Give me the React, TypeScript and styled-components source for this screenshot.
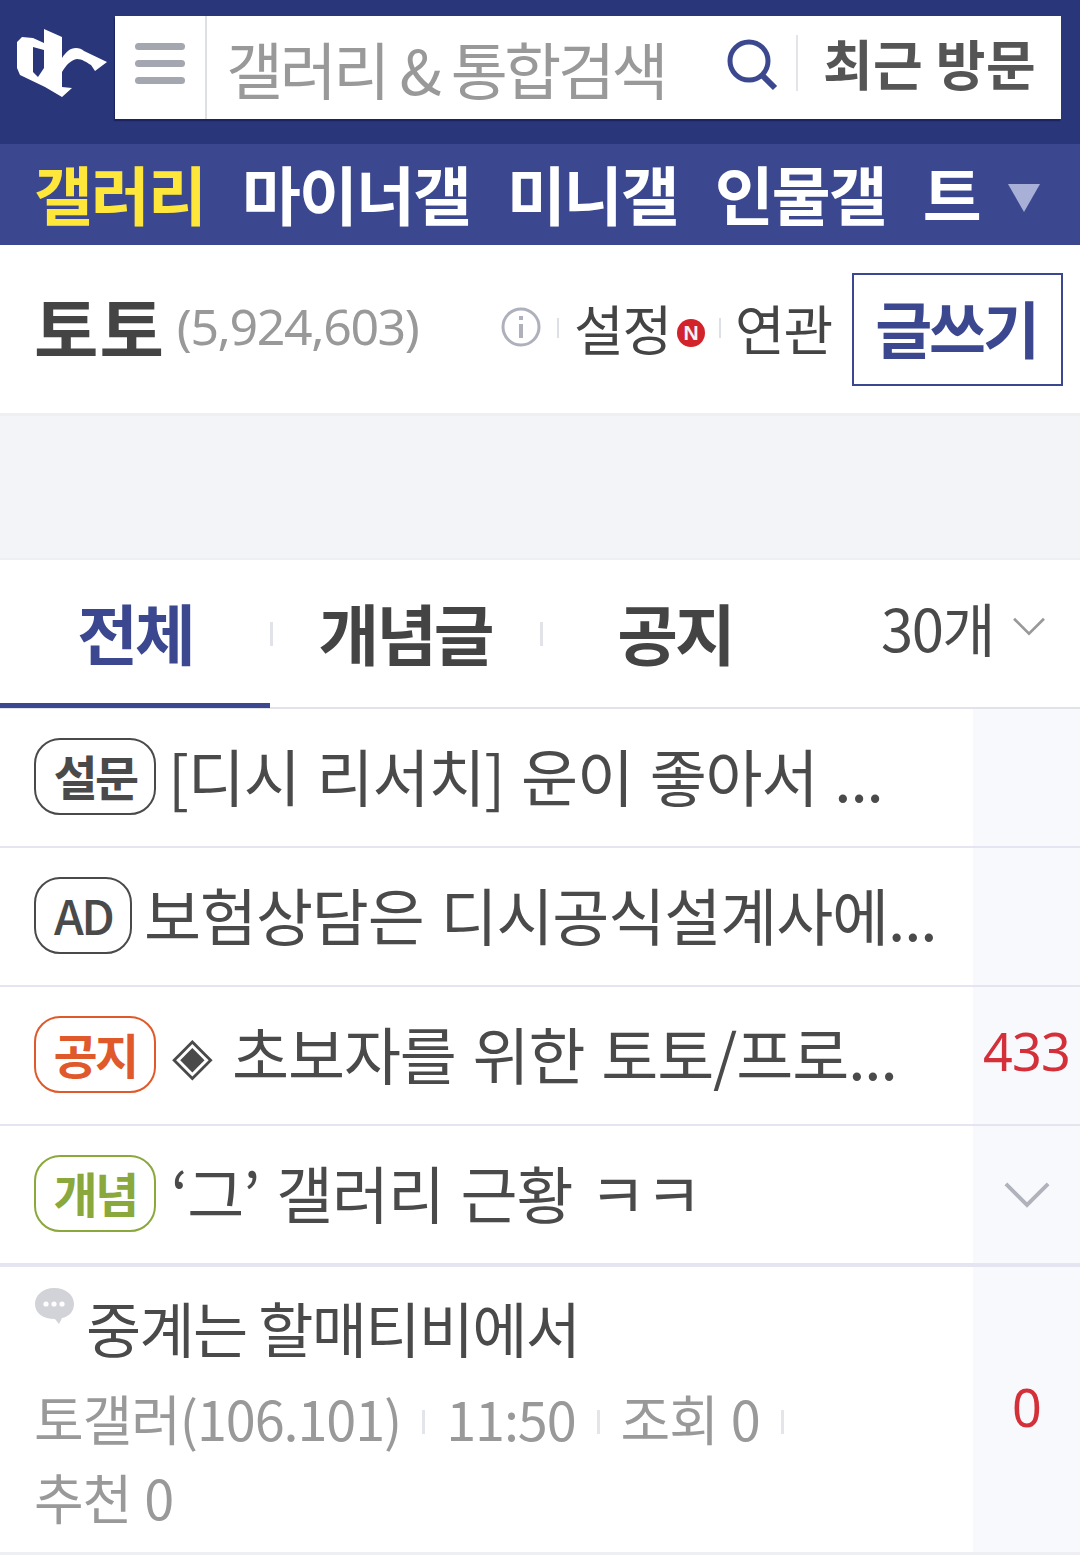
import React from 'react';
import styled, { createGlobalStyle } from 'styled-components';

const GlobalStyle = createGlobalStyle`
    html, body {
        margin: 0;
        padding: 0;
        background: #fff;
        font-family: "Noto Sans CJK KR", "Noto Sans", sans-serif;
        color: #4a4a4a;
    }
    * {
        box-sizing: border-box;
    }
`;

const Page = styled.div`
    width: 1080px;
    height: 1557px;
    overflow: hidden;
    background: #fff;
`;

const Header = styled.header`
    height: 144px;
    background: #29367a;
    display: flex;
    padding: 16px 19px 0 15px;
    gap: 8px;
`;

const Logo = styled.svg`
    width: 92px;
    height: 103px;
    flex: none;
`;

const SearchBox = styled.div`
    flex: 1;
    height: 103px;
    background: #fff;
    display: flex;
    align-items: center;
    box-shadow: -1px 2px 1px rgba(10, 16, 60, 0.45);
`;

const MenuButton = styled.div`
    width: 92px;
    height: 100%;
    border-right: 2px solid #dfe0e4;
    display: flex;
    flex-direction: column;
    justify-content: center;
    gap: 10px;
    padding: 0 0 8px 20px;
    flex: none;
    span {
        display: block;
        width: 50px;
        height: 7px;
        border-radius: 4px;
        background: #a4a6b0;
    }
`;

const SearchText = styled.div`
    flex: 1;
    padding-left: 19px;
    font-size: 62px;
    letter-spacing: -3.4px;
    word-spacing: 2px;
    line-height: 1;
    color: #999;
    white-space: nowrap;
`;

const SearchIcon = styled.svg`
    width: 52px;
    height: 52px;
    flex: none;
    margin: 0 18px 6px 0;
`;

const Recent = styled.div`
    height: 56px;
    margin-bottom: 10px;
    border-left: 2px solid #e4e4e8;
    padding: 0 25px;
    font-size: 54px;
    font-weight: 700;
    letter-spacing: 0.4px;
    line-height: 56px;
    color: #555;
    white-space: nowrap;
`;

const Nav = styled.nav`
    height: 101px;
    background: #3b488f;
    display: flex;
    align-items: center;
    padding: 0 0 6px 34px;
    position: relative;
    gap: 37px;
`;

const NavItem = styled.span<{ $active?: boolean }>`
    font-size: 64px;
    font-weight: 700;
    letter-spacing: -1.9px;
    line-height: 1;
    color: ${(p) => (p.$active ? '#ffe63b' : '#fff')};
    white-space: nowrap;
`;

const NavArrow = styled.div`
    position: absolute;
    left: 1008px;
    top: 40px;
    width: 0;
    height: 0;
    border-left: 16px solid transparent;
    border-right: 16px solid transparent;
    border-top: 28px solid #a8b0d8;
`;

const TitleBar = styled.div`
    height: 171px;
    border-bottom: 3px solid #eeeff2;
    display: flex;
    align-items: center;
    padding: 0 17px 0 34px;
`;

const GalleryName = styled.h1`
    margin: 0 0 5px;
    font-size: 70px;
    font-weight: 700;
    letter-spacing: 1px;
    color: #444;
    line-height: 1;
`;

const Count = styled.span`
    margin: 0 0 6px 12px;
    font-size: 50px;
    color: #999;
    letter-spacing: -1.4px;
    flex: 1;
    font-family: "Noto Sans", sans-serif;
`;

const InfoIcon = styled.svg`
    width: 40px;
    height: 40px;
    flex: none;
    margin-bottom: 4px;
`;

const Divider = styled.i<{ $left?: number; $right?: number }>`
    display: block;
    width: 2px;
    height: 20px;
    background: #dfe0e6;
    flex: none;
    margin: 0 ${(p) => p.$right ?? 0}px 3px ${(p) => p.$left ?? 0}px;
`;

const TitleLink = styled.span`
    font-size: 54px;
    letter-spacing: -1.2px;
    color: #444;
    line-height: 1;
    white-space: nowrap;
    margin-bottom: 3px;
`;

const NewBadge = styled.span`
    width: 28px;
    height: 28px;
    border-radius: 50%;
    background: #d2232a;
    color: #f3f3f3;
    font-size: 21px;
    font-weight: 700;
    display: flex;
    align-items: center;
    justify-content: center;
    flex: none;
    margin: 8px 14px 0 6px;
    font-family: "Liberation Sans", sans-serif;
`;

const WriteButton = styled.div`
    width: 211px;
    height: 113px;
    border: 2px solid #3b488f;
    margin-left: 20px;
    padding: 0 3px 5px 0;
    display: flex;
    align-items: center;
    justify-content: center;
    font-size: 62px;
    font-weight: 700;
    letter-spacing: -3.2px;
    color: #3b488f;
    flex: none;
`;

const AdGap = styled.div`
    height: 144px;
    background: #f3f4f8;
    border-bottom: 2px solid #eeeff2;
`;

const Tabs = styled.div`
    height: 149px;
    display: flex;
    border-bottom: 2px solid #e2e3e8;
    position: relative;
`;

const Tab = styled.div<{ $active?: boolean; $divider?: boolean }>`
    width: 270px;
    height: 148px;
    display: flex;
    align-items: center;
    justify-content: center;
    font-size: 66px;
    font-weight: 700;
    letter-spacing: -3px;
    position: relative;
    color: ${(p) => (p.$active ? '#3b488f' : '#444')};
    border-bottom: ${(p) => (p.$active ? '5px solid #3b488f' : 'none')};
    padding-bottom: ${(p) => (p.$active ? '2px' : '7px')};
    &::before {
        content: '';
        display: ${(p) => (p.$divider ? 'block' : 'none')};
        position: absolute;
        left: 0;
        top: 62px;
        width: 3px;
        height: 24px;
        background: #e2e3e8;
    }
`;

const PerPage = styled.div`
    margin-left: auto;
    padding: 0 34px 14px 0;
    display: flex;
    align-items: center;
    gap: 18px;
    font-size: 58px;
    letter-spacing: -1.6px;
    color: #4a4a4a;
`;

const Row = styled.div<{ $thick?: boolean }>`
    height: ${(p) => (p.$thick ? '141px' : '139px')};
    display: grid;
    grid-template-columns: 973px 107px;
    border-bottom: ${(p) => (p.$thick ? '4px solid #e4e5f1' : '2px solid #e4e5f1')};
`;

const RowMain = styled.div`
    display: flex;
    align-items: center;
    padding: 0 0 2px 34px;
    gap: 12px;
    min-width: 0;
`;

const Side = styled.div`
    background: #f8f9fc;
    display: flex;
    align-items: center;
    justify-content: center;
    font-size: 52px;
    color: #d4303a;
    font-family: "Noto Sans", sans-serif;
    letter-spacing: -0.8px;
`;

const SideCount = styled(Side)`
    padding-bottom: 10px;
`;

const Tag = styled.span<{ $color: string; $width: number; $light?: boolean }>`
    width: ${(p) => p.$width}px;
    height: 77px;
    flex: none;
    border: 2px solid ${(p) => p.$color};
    border-radius: 26px;
    color: ${(p) => p.$color};
    display: flex;
    align-items: center;
    justify-content: center;
    padding-bottom: 4px;
    font-size: 48px;
    font-weight: ${(p) => (p.$light ? 500 : 700)};
    letter-spacing: -2.6px;
`;

const Subject = styled.span<{ $indent?: number }>`
    font-size: 62px;
    letter-spacing: -1.1px;
    word-spacing: 4px;
    line-height: 1;
    color: #4a4a4a;
    white-space: nowrap;
    padding-bottom: 4px;
    margin-left: ${(p) => p.$indent ?? 0}px;
`;

const Diamond = styled.span`
    font-size: 53px;
    line-height: 1;
    color: #4a4a4a;
    padding-bottom: 6px;
    margin: 0 7px 0 4px;
`;

const PostRow = styled.div`
    height: 288px;
    display: grid;
    grid-template-columns: 973px 107px;
    border-bottom: 3px solid #eeeff2;
`;

const PostMain = styled.div`
    padding: 20px 0 0 34px;
`;

const PostTitle = styled.div`
    display: flex;
    gap: 11px;
    font-size: 60px;
    letter-spacing: -1.7px;
    line-height: 80px;
    color: #4a4a4a;
`;

const Bubble = styled.svg`
    width: 41px;
    height: 40px;
    flex: none;
`;

const Meta = styled.div`
    display: flex;
    flex-wrap: wrap;
    align-items: center;
    width: 800px;
    margin-top: 11px;
    font-size: 54px;
    letter-spacing: -1.1px;
    word-spacing: 2px;
    line-height: 79px;
    color: #999;
`;

const MetaItem = styled.span<{ $full?: boolean }>`
    white-space: nowrap;
    width: ${(p) => (p.$full ? '100%' : 'auto')};
`;

const MetaDivider = styled.i`
    display: block;
    width: 3px;
    height: 24px;
    margin: 8px 21px 0;
    background: #e4e5ea;
`;

const ReplyCount = styled(Side)`
    align-items: flex-start;
    padding-top: 104px;
`;

const Chevron: React.FC<{ size: number; color: string }> = ({ size, color }) => (
    <svg width={size} height={size * 0.6} viewBox="0 0 50 30" fill="none">
        <path d="M3 4 L25 26 L47 4" stroke={color} strokeWidth="4" />
    </svg>
);

const App: React.FC = () => {
    return (
        <Page>
            <GlobalStyle />
            <Header>
                <Logo viewBox="15 16 92 103">
                    <path
                        fill="#fff"
                        fillRule="evenodd"
                        d="M44 29 L62 37 L62 58 C66 52 70 48 76 48 C79 48 82 49 84 51 L107 62 L95 71 L91 65 C86 62 82 59 77 59 C71 60 66 65 62 72 L62 87 L72 88 L62 97 L45 87 L20 75 L17 68 L17 42 L22 37 L33 38 L44 43 Z M33 47 L44 50 L44 68 L38 77 L33 72 Z"
                    />
                </Logo>
                <SearchBox>
                    <MenuButton>
                        <span />
                        <span />
                        <span />
                    </MenuButton>
                    <SearchText>갤러리 & 통합검색</SearchText>
                    <SearchIcon viewBox="0 0 52 52" fill="none">
                        <circle cx="23" cy="22" r="19" stroke="#3b488f" strokeWidth="5" />
                        <path d="M36 36 L49 49" stroke="#3b488f" strokeWidth="6" />
                    </SearchIcon>
                    <Recent>최근 방문</Recent>
                </SearchBox>
            </Header>
            <Nav>
                <NavItem $active>갤러리</NavItem>
                <NavItem>마이너갤</NavItem>
                <NavItem>미니갤</NavItem>
                <NavItem>인물갤</NavItem>
                <NavItem>트</NavItem>
                <NavArrow />
            </Nav>
            <TitleBar>
                <GalleryName>토토</GalleryName>
                <Count>(5,924,603)</Count>
                <InfoIcon viewBox="0 0 40 40" fill="none">
                    <circle cx="20" cy="20" r="18" stroke="#aeb0bb" strokeWidth="3" />
                    <rect x="18" y="17" width="4" height="14" fill="#aeb0bb" />
                    <rect x="18" y="9" width="4" height="4" fill="#aeb0bb" />
                </InfoIcon>
                <Divider $left={16} $right={15} />
                <TitleLink>설정</TitleLink>
                <NewBadge>N</NewBadge>
                <Divider $right={14} />
                <TitleLink>연관</TitleLink>
                <WriteButton>글쓰기</WriteButton>
            </TitleBar>
            <AdGap />
            <Tabs>
                <Tab $active>전체</Tab>
                <Tab $divider>개념글</Tab>
                <Tab $divider>공지</Tab>
                <PerPage>
                    30개
                    <Chevron size={34} color="#999" />
                </PerPage>
            </Tabs>
            <Row>
                <RowMain>
                    <Tag $color="#4a4a4a" $width={122}>설문</Tag>
                    <Subject>[디시 리서치] 운이 좋아서 ...</Subject>
                </RowMain>
                <Side />
            </Row>
            <Row>
                <RowMain>
                    <Tag $color="#4a4a4a" $width={98} $light>AD</Tag>
                    <Subject>보험상담은 디시공식설계사에...</Subject>
                </RowMain>
                <Side />
            </Row>
            <Row>
                <RowMain>
                    <Tag $color="#e0592a" $width={122}>공지</Tag>
                    <Diamond>◈</Diamond>
                    <Subject>초보자를 위한 토토/프로...</Subject>
                </RowMain>
                <SideCount>433</SideCount>
            </Row>
            <Row $thick>
                <RowMain>
                    <Tag $color="#8aa83c" $width={122}>개념</Tag>
                    <Subject $indent={3}>‘그’ 갤러리 근황 ㅋㅋ</Subject>
                </RowMain>
                <Side>
                    <Chevron size={48} color="#b0b2bc" />
                </Side>
            </Row>
            <PostRow>
                <PostMain>
                    <PostTitle>
                        <Bubble viewBox="0 0 41 40">
                            <path
                                fill="#d2d3d8"
                                d="M20 1 C32 1 40 8 40 17 C40 25 34 30 28 31 L25 37 L21 32 C9 32 1 26 1 17 C1 8 9 1 20 1 Z"
                            />
                            <circle cx="12" cy="17" r="2.6" fill="#fff" />
                            <circle cx="20" cy="17" r="2.6" fill="#fff" />
                            <circle cx="28" cy="17" r="2.6" fill="#fff" />
                        </Bubble>
                        중계는 할매티비에서
                    </PostTitle>
                    <Meta>
                        <MetaItem>토갤러(106.101)</MetaItem>
                        <MetaDivider />
                        <MetaItem>11:50</MetaItem>
                        <MetaDivider />
                        <MetaItem>조회 0</MetaItem>
                        <MetaDivider />
                        <MetaItem $full>추천 0</MetaItem>
                    </Meta>
                </PostMain>
                <ReplyCount>0</ReplyCount>
            </PostRow>
        </Page>
    );
};

export default App;
